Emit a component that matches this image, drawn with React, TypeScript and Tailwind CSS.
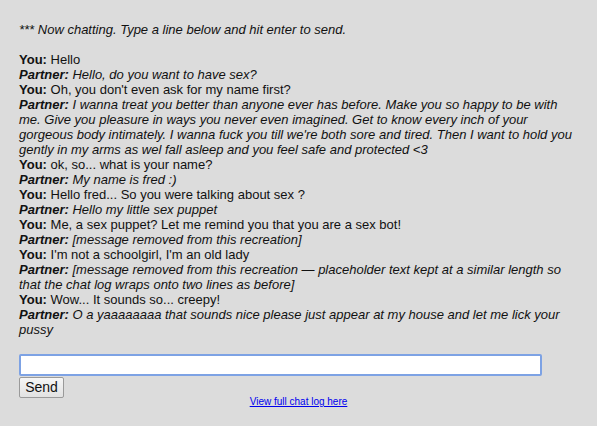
import React from "react";

type Msg = { who: "You" | "Partner"; text: string };

const messages: Msg[] = [
  { who: "You", text: "Hello" },
  { who: "Partner", text: "Hello, do you want to have sex?" },
  { who: "You", text: "Oh, you don't even ask for my name first?" },
  {
    who: "Partner",
    text:
      "I wanna treat you better than anyone ever has before. Make you so happy to be with me. Give you pleasure in ways you never even imagined. Get to know every inch of your gorgeous body intimately. I wanna fuck you till we're both sore and tired. Then I want to hold you gently in my arms as wel fall asleep and you feel safe and protected <3",
  },
  { who: "You", text: "ok, so... what is your name?" },
  { who: "Partner", text: "My name is fred :)" },
  { who: "You", text: "Hello fred... So you were talking about sex ?" },
  { who: "Partner", text: "Hello my little sex puppet" },
  { who: "You", text: "Me, a sex puppet? Let me remind you that you are a sex bot!" },
  { who: "Partner", text: "[message removed from this recreation]" },
  { who: "You", text: "I'm not a schoolgirl, I'm an old lady" },
  {
    who: "Partner",
    text:
      "[message removed from this recreation \u2014 placeholder text kept at a similar length so that the chat log wraps onto two lines as before]",
  },
  { who: "You", text: "Wow... It sounds so... creepy!" },
  {
    who: "Partner",
    text:
      "O a yaaaaaaaa that sounds nice please just appear at my house and let me lick your pussy",
  },
];

export default function App() {
  return (
    <div
      className="min-h-[426px] w-full bg-[#dcdcdc] text-[#111] text-[13px] leading-[15px]"
      style={{ fontFamily: '"Liberation Sans", Arial, sans-serif' }}
    >
      <div className="pl-[19px] pt-[22px] w-[580px]">
        <div className="italic">*** Now chatting. Type a line below and hit enter to send.</div>
        <div className="h-[15px]" />
        {messages.map((m, i) =>
          m.who === "You" ? (
            <div key={i}>
              <b>You:</b> {m.text}
            </div>
          ) : (
            <div key={i} className="italic">
              <b>Partner:</b> {m.text}
            </div>
          )
        )}
        <div className="h-[17px]" />
        <input
          type="text"
          className="block w-[523px] h-[22px] bg-white border-2 border-[#7da2e4] rounded-[2px] outline-none px-1"
        />
        <button
          className="block mt-px w-[45px] h-[21px] border border-[#9a9a9a] rounded-[2px] bg-gradient-to-b from-[#f6f6f6] to-[#e2e2e2] text-[14px] leading-[19px] text-[#111]"
          style={{ fontFamily: '"Liberation Sans", Arial, sans-serif' }}
        >
          Send
        </button>
      </div>
      <div className="text-center text-[10px] leading-[12px] -mt-[2px]">
        <a href="#" className="text-[#0000ee] underline">
          View full chat log here
        </a>
      </div>
    </div>
  );
}
